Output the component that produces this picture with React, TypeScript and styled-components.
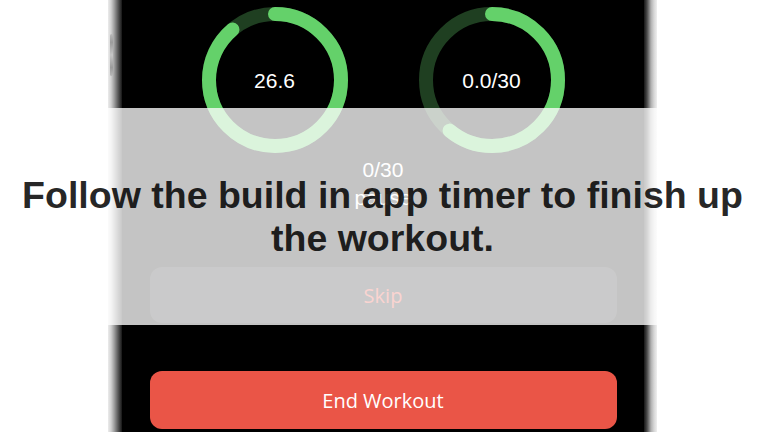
import React from 'react';
import styled, { createGlobalStyle } from 'styled-components';

const GlobalStyle = createGlobalStyle`
  html, body {
    margin: 0;
    padding: 0;
    background: #ffffff;
    overflow: hidden;
  }
`;

const Page = styled.div`
  position: relative;
  width: 764px;
  height: 432px;
  display: flex;
  justify-content: center;
  background: #ffffff;
  overflow: hidden;
`;

const Phone = styled.div`
  position: relative;
  width: 549px;
  height: 432px;
  box-sizing: border-box;
  padding: 0 13px 0 14px;
  background: linear-gradient(
    90deg,
    #ececec 0px,
    #d2d2d2 3px,
    #a2a2a2 6px,
    #5a5a5a 10px,
    #161616 14px,
    #161616 calc(100% - 13px),
    #4a4a4a calc(100% - 10px),
    #b0b0b0 calc(100% - 6px),
    #d6d6d6 calc(100% - 3px),
    #efefef 100%
  );

  /* side key on the left edge of the frame */
  &::before {
    content: '';
    position: absolute;
    left: 2px;
    top: 34px;
    width: 3px;
    height: 42px;
    border-radius: 2px;
    background: linear-gradient(180deg, #b8b8b8, #9c9c9c 20%, #c6c6c6 50%, #9c9c9c 80%, #b8b8b8);
  }
`;

const Screen = styled.div`
  height: 100%;
  background: #000000;
  display: flex;
  flex-direction: column;
  align-items: center;
  padding: 7px 27px 0 28px;
  box-sizing: border-box;
  font-family: 'Liberation Sans', Arial, sans-serif;
  color: #ffffff;
`;

const RingRow = styled.div`
  display: flex;
  gap: 71px;
`;

const RingBox = styled.div`
  position: relative;
  width: 146px;
  height: 146px;
  display: flex;
  align-items: center;
  justify-content: center;
`;

const RingSvg = styled.svg`
  position: absolute;
  inset: 0;
  transform: rotate(-90deg);
`;

const RingLabel = styled.span`
  position: relative;
  font-size: 21px;
  line-height: 1;
  padding-top: 1px;
`;

const StatusLine = styled.div<{ $first?: boolean }>`
  font-size: 21px;
  line-height: 24px;
  margin-top: ${(p) => (p.$first ? '5px' : '4px')};
`;

const ActionButton = styled.div<{ $tone: 'dark' | 'red'; $gap: number; $h: number }>`
  align-self: stretch;
  height: ${(p) => p.$h}px;
  margin-top: ${(p) => p.$gap}px;
  border-radius: 12px;
  display: flex;
  align-items: center;
  justify-content: center;
  font-family: 'Open Sans', 'Liberation Sans', sans-serif;
  font-size: 20px;
  background: ${(p) => (p.$tone === 'red' ? '#ea5547' : '#1c1c1e')};
  color: ${(p) => (p.$tone === 'red' ? '#ffffff' : '#e9473a')};
`;

const Veil = styled.div`
  position: absolute;
  left: 0;
  right: 0;
  top: 108px;
  height: 217px;
  background: rgba(255, 255, 255, 0.77);
  display: flex;
  align-items: center;
  justify-content: center;
`;

const Caption = styled.div`
  font-family: 'Liberation Sans', Arial, sans-serif;
  font-weight: 700;
  font-size: 37.5px;
  line-height: 43px;
  text-align: center;
  white-space: nowrap;
  color: rgba(0, 0, 0, 0.86);
  padding-left: 1px;
`;

type RingProps = { progress: number; label: string };

const Ring: React.FC<RingProps> = ({ progress, label }) => {
  const r = 66;
  const c = 2 * Math.PI * r;
  return (
    <RingBox>
      <RingSvg width="146" height="146" viewBox="0 0 146 146">
        <circle cx="73" cy="73" r={r} fill="none" stroke="#1f3f21" strokeWidth="14" />
        <circle
          cx="73"
          cy="73"
          r={r}
          fill="none"
          stroke="#64d16a"
          strokeWidth="14"
          strokeLinecap="round"
          strokeDasharray={`${c * progress} ${c}`}
        />
      </RingSvg>
      <RingLabel>{label}</RingLabel>
    </RingBox>
  );
};

const App: React.FC = () => {
  return (
    <>
      <GlobalStyle />
      <Page>
        <Phone>
          <Screen>
            <RingRow>
              <Ring progress={0.887} label="26.6" />
              <Ring progress={0.61} label="0.0/30" />
            </RingRow>
            <StatusLine $first>0/30</StatusLine>
            <StatusLine>pause</StatusLine>
            <ActionButton $tone="dark" $gap={57} $h={56}>
              Skip
            </ActionButton>
            <ActionButton $tone="red" $gap={48} $h={58}>
              End Workout
            </ActionButton>
          </Screen>
        </Phone>
        <Veil>
          <Caption>
            Follow the build in app timer to finish up
            <br />
            the workout.
          </Caption>
        </Veil>
      </Page>
    </>
  );
};

export default App;
